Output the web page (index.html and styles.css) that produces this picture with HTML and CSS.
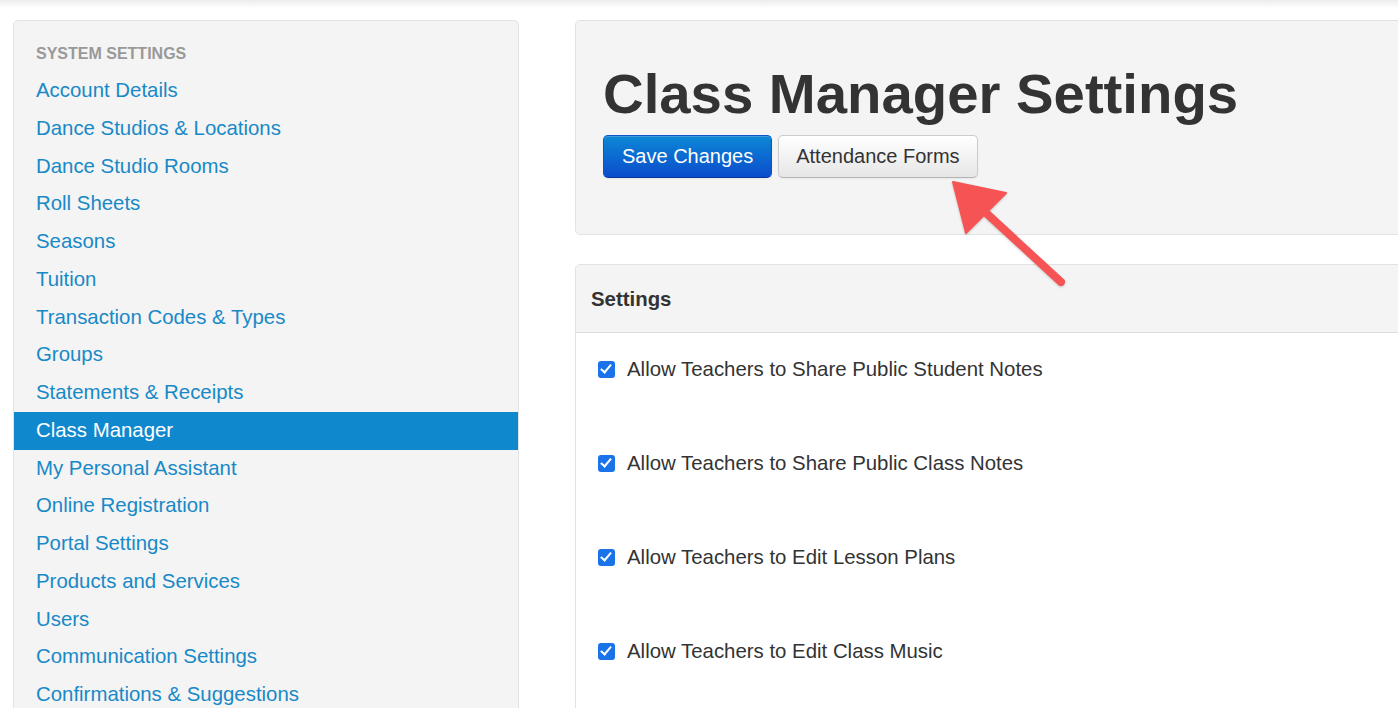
FILE: index.html
```html
<!doctype html>
<html lang="en">
	<head>
		<title>Class Manager Settings</title>
		<link rel="stylesheet" href="styles.css">
	</head>
	<body>
		<div class="top-shade"></div>

		<div class="layout">
			<!-- Left navigation -->
			<div class="sidebar">
				<div class="nav-header">SYSTEM SETTINGS</div>
				<a class="nav-link" href="#">Account Details</a>
				<a class="nav-link" href="#">Dance Studios &amp; Locations</a>
				<a class="nav-link" href="#">Dance Studio Rooms</a>
				<a class="nav-link" href="#">Roll Sheets</a>
				<a class="nav-link" href="#">Seasons</a>
				<a class="nav-link" href="#">Tuition</a>
				<a class="nav-link" href="#">Transaction Codes &amp; Types</a>
				<a class="nav-link" href="#">Groups</a>
				<a class="nav-link" href="#">Statements &amp; Receipts</a>
				<a class="nav-link active" href="#">Class Manager</a>
				<a class="nav-link" href="#">My Personal Assistant</a>
				<a class="nav-link" href="#">Online Registration</a>
				<a class="nav-link" href="#">Portal Settings</a>
				<a class="nav-link" href="#">Products and Services</a>
				<a class="nav-link" href="#">Users</a>
				<a class="nav-link" href="#">Communication Settings</a>
				<a class="nav-link" href="#">Confirmations &amp; Suggestions</a>
			</div>

			<!-- Main content -->
			<div class="main">
				<div class="page-header">
					<h1>Class Manager Settings</h1>
					<div class="actions">
						<button class="btn btn-primary">Save Changes</button>
						<button class="btn">Attendance Forms</button>
					</div>
				</div>

				<div class="panel">
					<div class="panel-heading">Settings</div>
					<div class="panel-body">
						<label class="setting"><input type="checkbox" checked> Allow Teachers to Share Public Student Notes</label>
						<label class="setting"><input type="checkbox" checked> Allow Teachers to Share Public Class Notes</label>
						<label class="setting"><input type="checkbox" checked> Allow Teachers to Edit Lesson Plans</label>
						<label class="setting"><input type="checkbox" checked> Allow Teachers to Edit Class Music</label>
					</div>
				</div>
			</div>
		</div>

		<!-- Annotation arrow pointing at the Attendance Forms button -->
		<svg class="callout" width="1398" height="708" viewBox="0 0 1398 708">
			<line x1="984" y1="211" x2="1061" y2="282" stroke="#f65454" stroke-width="8" stroke-linecap="round"/>
			<polygon points="953,182 1006,193 966,233" fill="#f65454" stroke="#f65454" stroke-width="2" stroke-linejoin="round"/>
		</svg>
	</body>
</html>
```

FILE: styles.css
```css
/* Page setup */

html, body {
	overflow: hidden;
}

body {
	margin: 0;
	background: white;
	color: #333;
	font-family: "Liberation Sans", Arial, sans-serif;
}

.top-shade {
	height: 8px;
	margin-bottom: -8px;
	background: linear-gradient(#ececec, rgba(255, 255, 255, 0));
}

.layout {
	display: flex;
	align-items: flex-start;
	gap: 56px;
	padding: 20px 0 0 13px;
	width: 1500px;
}

/* Sidebar */

.sidebar {
	width: 504px;
	flex: none;
	background: #f4f4f4;
	border: 1px solid #e2e2e2;
	border-radius: 5px;
	padding-bottom: 20px;
}

.nav-header {
	padding: 23px 22px 8px;
	line-height: 20px;
	font-size: 16px;
	font-weight: bold;
	color: #999;
}

.nav-link {
	display: block;
	padding: 0 22px;
	line-height: 37.75px;
	font-size: 20.4px;
	color: #1889c7;
	text-decoration: none;
}

.nav-link.active {
	background: #0f88cd;
	color: white;
}

/* Main column */

.main {
	width: 900px;
	flex: none;
}

.page-header {
	background: #f4f4f4;
	border: 1px solid #e2e2e2;
	border-radius: 5px;
	padding: 42px 27px 56px;
}

h1 {
	margin: 0 0 10px;
	font-size: 56.3px;
	line-height: 62px;
	color: #333;
}

.actions {
	display: flex;
	gap: 6px;
}

.btn {
	height: 43px;
	padding: 0 17px;
	font-family: inherit;
	font-size: 20px;
	color: #333;
	background: linear-gradient(#ffffff, #e6e6e6);
	border: 1px solid #cccccc;
	border-bottom-color: #b3b3b3;
	border-radius: 5px;
	box-shadow: inset 0 1px 0 rgba(255, 255, 255, 0.2), 0 1px 2px rgba(0, 0, 0, 0.05);
}

.btn-primary {
	padding: 0 18px;
	color: white;
	background: linear-gradient(#0b88d6, #0c4ccb);
	border-color: #0b55c6 #0b55c6 #073a96;
}

/* Settings panel */

.panel {
	margin-top: 29px;
	border: 1px solid #e2e2e2;
	border-radius: 5px;
	background: white;
}

.panel-heading {
	background: #f4f4f4;
	border-bottom: 1px solid #dddddd;
	padding: 1px 15px 0;
	line-height: 66px;
	font-size: 20.4px;
	font-weight: bold;
	border-radius: 5px 5px 0 0;
}

.panel-body {
	padding-bottom: 60px;
}

.setting {
	display: flex;
	align-items: center;
	padding: 25px 22px 47px;
	line-height: 22px;
	font-size: 20.4px;
	color: #333;
}

.setting input {
	appearance: none;
	position: relative;
	width: 17px;
	height: 17px;
	margin: 0 12px 0 0;
	border-radius: 3px;
	background: #1a73e8;
	flex: none;
}

.setting input::after {
	content: "";
	position: absolute;
	left: 5px;
	top: 1.5px;
	width: 4px;
	height: 9px;
	border: solid white;
	border-width: 0 2.5px 2.5px 0;
	transform: rotate(40deg);
}

/* Annotation overlay */

.callout {
	position: absolute;
	left: 0;
	top: 0;
	pointer-events: none;
	filter: drop-shadow(0 1px 1px rgba(0, 0, 0, 0.2));
}
```
